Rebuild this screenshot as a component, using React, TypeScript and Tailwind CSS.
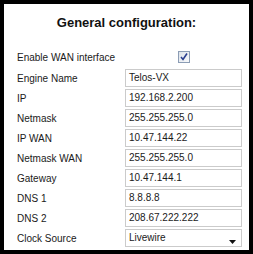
import React from "react";

const rows: [string, string][] = [
  ["Engine Name", "Telos-VX"],
  ["IP", "192.168.2.200"],
  ["Netmask", "255.255.255.0"],
  ["IP WAN", "10.47.144.22"],
  ["Netmask WAN", "255.255.255.0"],
  ["Gateway", "10.47.144.1"],
  ["DNS 1", "8.8.8.8"],
  ["DNS 2", "208.67.222.222"],
];

function Box({ children, arrow }: { children: React.ReactNode; arrow?: boolean }) {
  return (
    <div className="relative flex h-[18px] w-[117px] items-center border border-[#cbcbcb] bg-white pl-[3px] text-[10px] leading-none text-[#1a1a1a]">
      {children}
      {arrow && (
        <svg className="absolute right-[5px] top-[10px]" width="7" height="4" viewBox="0 0 7 4">
          <polygon points="0,0 7,0 3.5,4" fill="#111" />
        </svg>
      )}
    </div>
  );
}

export default function App() {
  return (
    <div
      className="box-border h-[254px] w-[253px] border-4 border-black bg-white"
      style={{ fontFamily: '"Liberation Sans", Arial, sans-serif' }}
    >
      <div className="flex h-[18px] mt-[10px] items-center justify-center text-[13px] font-bold text-[#111]">
        General configuration:
      </div>
      <div className="mt-[17px] flex h-[16px] items-center pl-[13px]">
        <div className="w-[108px] text-[10px] text-[#1a1a1a]">Enable WAN interface</div>
        <div className="flex w-[117px] justify-center">
          <div className="ml-[1px] flex h-[12px] w-[12px] items-center justify-center border border-[#8c9db5] bg-gradient-to-br from-[#dde3ea] to-[#f8f9fb]">
            <svg width="8" height="8" viewBox="0 0 8 8">
              <path d="M1 4 L3 6.5 L7 0.5" stroke="#2a3f8f" strokeWidth="1.6" fill="none" />
            </svg>
          </div>
        </div>
      </div>
      <div className="mt-[4px] flex flex-col gap-[2px] pl-[13px]">
        {rows.map(([label, value]) => (
          <div key={label} className="flex items-center">
            <div className="w-[108px] text-[10px] text-[#1a1a1a]">{label}</div>
            <Box>{value}</Box>
          </div>
        ))}
        <div className="flex items-center">
          <div className="w-[108px] text-[10px] text-[#1a1a1a]">Clock Source</div>
          <Box arrow>Livewire</Box>
        </div>
      </div>
    </div>
  );
}
